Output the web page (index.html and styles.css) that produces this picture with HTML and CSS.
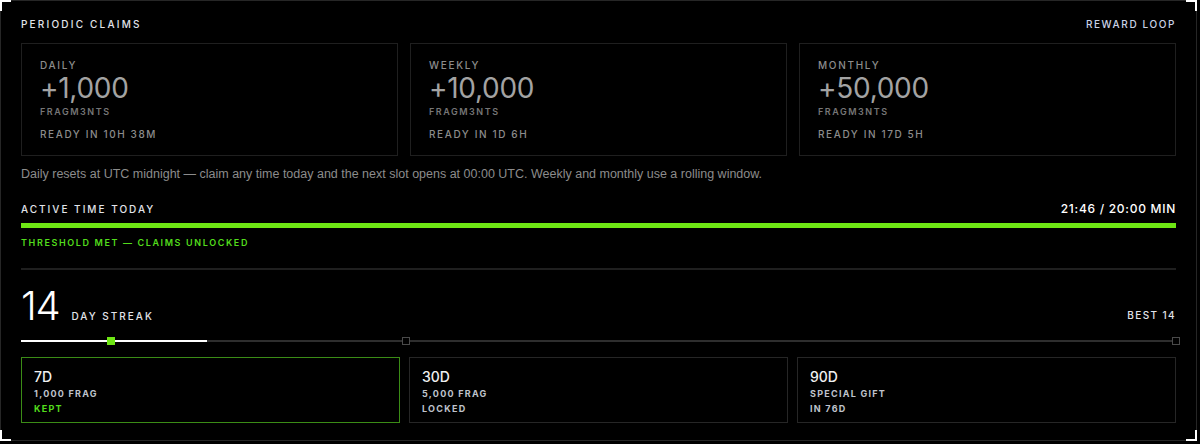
FILE: index.html
```html
<!DOCTYPE html>
<html lang="en">
<head>
  <meta charset="UTF-8" />
  <meta name="viewport" content="width=device-width, initial-scale=1.0" />
  <title>Periodic Claims</title>
  <link rel="stylesheet" href="styles.css">
</head>
<body>

  <div class="panel">
    <!-- ───── corner accents ───── -->
    <span class="corner corner-tl"></span>
    <span class="corner corner-tr"></span>
    <span class="corner corner-bl"></span>
    <span class="corner corner-br"></span>

    <!-- ───── header ───── -->
    <div class="panel-head">
      <span class="eyebrow">PERIODIC CLAIMS</span>
      <span class="eyebrow eyebrow-link">REWARD LOOP</span>
    </div>

    <!-- ───── claim cards ───── -->
    <div class="claims">
      <div class="claim">
        <div class="claim-label">DAILY</div>
        <div class="claim-amount">+1,000</div>
        <div class="claim-unit">FRAGM3NTS</div>
        <div class="claim-ready">READY IN 10H 38M</div>
      </div>
      <div class="claim">
        <div class="claim-label">WEEKLY</div>
        <div class="claim-amount">+10,000</div>
        <div class="claim-unit">FRAGM3NTS</div>
        <div class="claim-ready">READY IN 1D 6H</div>
      </div>
      <div class="claim">
        <div class="claim-label">MONTHLY</div>
        <div class="claim-amount">+50,000</div>
        <div class="claim-unit">FRAGM3NTS</div>
        <div class="claim-ready">READY IN 17D 5H</div>
      </div>
    </div>

    <p class="note">Daily resets at UTC midnight — claim any time today and the next slot opens at 00:00 UTC. Weekly and monthly use a rolling window.</p>

    <!-- ───── active time ───── -->
    <div class="active-head">
      <span class="active-label">ACTIVE TIME TODAY</span>
      <span class="active-value">21:46 / 20:00 MIN</span>
    </div>
    <div class="bar"><div class="bar-fill" style="width: 100%"></div></div>
    <div class="threshold">THRESHOLD MET — CLAIMS UNLOCKED</div>

    <div class="divider"></div>

    <!-- ───── streak ───── -->
    <div class="streak-head">
      <div class="streak-count">
        <span class="streak-num">14</span>
        <span class="streak-label">DAY STREAK</span>
      </div>
      <span class="streak-best">BEST 14</span>
    </div>

    <div class="track">
      <div class="track-line"></div>
      <div class="track-fill" style="width: 16.1%"></div>
      <span class="node node-done" style="left: 7.78%"></span>
      <span class="node" style="left: 33.33%"></span>
      <span class="node" style="left: 100%"></span>
    </div>

    <div class="milestones">
      <div class="milestone milestone-kept">
        <div class="ms-title">7D</div>
        <div class="ms-sub">1,000 FRAG</div>
        <div class="ms-status ms-status-kept">KEPT</div>
      </div>
      <div class="milestone">
        <div class="ms-title">30D</div>
        <div class="ms-sub">5,000 FRAG</div>
        <div class="ms-status">LOCKED</div>
      </div>
      <div class="milestone">
        <div class="ms-title">90D</div>
        <div class="ms-sub">SPECIAL GIFT</div>
        <div class="ms-status">IN 76D</div>
      </div>
    </div>
  </div>

</body>
</html>
```

FILE: styles.css
```css
:root {
  /* colours */
  --c-text:      #e2e4ea;
  --c-link:      #c9d2e6;
  --c-muted:     #8c8c8c;
  --c-dim:       #767676;
  --c-amount:    #a3a3a3;
  --c-border:    #262626;
  --c-line:      #1f1f1f;
  --c-lime:      #6ee614;
  --c-green:     #52dc1c;
  --c-green-dim: #3b8c16;

  --bg-body:  #000000;
  --bg-panel: #000000;

  --font-ui:   'Inter', 'Noto Sans', sans-serif;
  --font-body: 'Liberation Sans', Arial, sans-serif;
}

/* ───── base ───── */
* { box-sizing: border-box; }

body {
  margin: 0;
  background: var(--bg-body);
  font-family: var(--font-ui);
  color: var(--c-text);
}

.panel {
  position: relative;
  width: 1197px;
  height: 441px;
  border: 1px solid var(--c-border);
  background: var(--bg-panel);
  padding: 16px 20px 0;
}

/* ───── corner accents ───── */
.corner {
  position: absolute;
  width: 11px;
  height: 11px;
  border-color: #ffffff;
  border-style: solid;
  border-width: 0;
}
.corner-tl { top: -1px;    left: -1px;  border-top-width: 2px;    border-left-width: 2px; }
.corner-tr { top: -1px;    right: -1px; border-top-width: 2px;    border-right-width: 2px; }
.corner-bl { bottom: -1px; left: -1px;  border-bottom-width: 2px; border-left-width: 2px; }
.corner-br { bottom: -1px; right: -1px; border-bottom-width: 2px; border-right-width: 2px; }

/* ───── header ───── */
.panel-head {
  display: flex;
  justify-content: space-between;
  line-height: 14px;
}
.eyebrow {
  font-size: 10px;
  font-weight: 500;
  letter-spacing: 0.22em;
  color: var(--c-text);
}
.eyebrow-link {
  letter-spacing: 0.16em;
  color: var(--c-link);
}

/* ───── claim cards ───── */
.claims {
  display: grid;
  grid-template-columns: repeat(3, 1fr);
  gap: 12px;
  margin-top: 12px;
}
.claim {
  height: 113px;
  border: 1px solid var(--c-line);
  padding: 14px 18px;
}
.claim-label {
  font-size: 10px;
  font-weight: 500;
  letter-spacing: 0.17em;
  line-height: 14px;
  color: var(--c-muted);
}
.claim-amount {
  font-size: 28px;
  line-height: 32px;
  letter-spacing: -0.01em;
  color: var(--c-amount);
}
.claim-unit {
  margin-top: 2px;
  font-size: 9px;
  font-weight: 600;
  letter-spacing: 0.17em;
  line-height: 12px;
  color: var(--c-dim);
}
.claim-ready {
  margin-top: 9px;
  font-size: 10px;
  font-weight: 500;
  letter-spacing: 0.16em;
  line-height: 14px;
  color: var(--c-muted);
}

.note {
  margin: 10px 0 0;
  font-family: var(--font-body);
  font-size: 12.5px;
  line-height: 16px;
  color: var(--c-muted);
}

/* ───── active time ───── */
.active-head {
  display: flex;
  justify-content: space-between;
  align-items: baseline;
  margin-top: 20px;
  line-height: 14px;
}
.active-label {
  font-size: 10px;
  font-weight: 500;
  letter-spacing: 0.2em;
}
.active-value {
  font-size: 12px;
  font-weight: 500;
  letter-spacing: 0.06em;
  color: #ffffff;
}

.bar {
  height: 5px;
  margin-top: 7px;
  background: #1a1a1a;
}
.bar-fill {
  height: 100%;
  background: var(--c-lime);
}

.threshold {
  margin-top: 9px;
  font-size: 9px;
  font-weight: 600;
  letter-spacing: 0.18em;
  line-height: 12px;
  color: var(--c-green);
}

.divider {
  height: 2px;
  margin-top: 19px;
  background: var(--c-line);
}

/* ───── streak ───── */
.streak-head {
  display: flex;
  justify-content: space-between;
  align-items: flex-end;
  margin-top: 17px;
}
.streak-count {
  display: flex;
  align-items: baseline;
  gap: 12px;
}
.streak-num {
  font-size: 40px;
  font-weight: 300;
  line-height: 38px;
  letter-spacing: -0.03em;
  color: #ffffff;
}
.streak-label,
.streak-best {
  font-size: 10px;
  font-weight: 500;
  letter-spacing: 0.2em;
  line-height: 14px;
}
.streak-best {
  padding-bottom: 3px;
  letter-spacing: 0.14em;
}

/* progress track */
.track {
  position: relative;
  height: 8px;
  margin-top: 12px;
}
.track-line,
.track-fill {
  position: absolute;
  left: 0;
  top: 3px;
  height: 2px;
}
.track-line {
  right: 0;
  background: #2e2e2e;
}
.track-fill { background: #ffffff; }

.node {
  position: absolute;
  top: 0;
  width: 8px;
  height: 8px;
  margin-left: -4px;
  background: #000000;
  border: 1px solid #4a4a4a;
}
.node-done {
  background: var(--c-lime);
  border-color: var(--c-lime);
}

/* milestone cards */
.milestones {
  display: grid;
  grid-template-columns: repeat(3, 1fr);
  gap: 9px;
  margin-top: 12px;
}
.milestone {
  height: 66px;
  border: 1px solid var(--c-border);
  padding: 10px 12px;
}
.milestone-kept { border-color: var(--c-green-dim); }

.ms-title {
  font-size: 14px;
  font-weight: 500;
  line-height: 18px;
  color: #f0f0f0;
}
.ms-sub,
.ms-status {
  font-size: 9px;
  font-weight: 700;
  letter-spacing: 0.14em;
  line-height: 15px;
  color: #bfc3cc;
}
.ms-status-kept { color: var(--c-green); }
```
